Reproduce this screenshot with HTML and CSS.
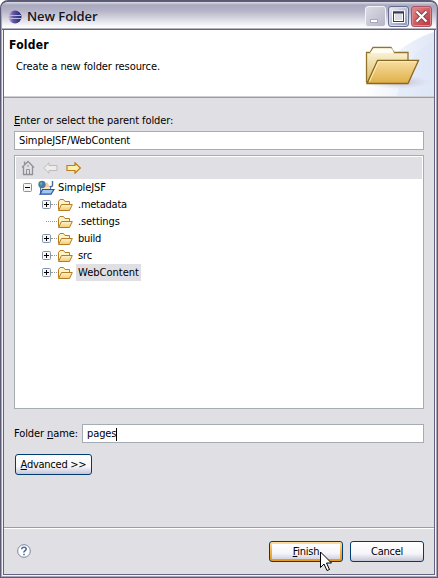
FILE: index.html
```html
<!DOCTYPE html>
<html lang="en">
<head>
<meta charset="utf-8">
<title>New Folder</title>
<link rel="stylesheet" href="styles.css">
</head>
<body>
<svg class="defs" width="0" height="0">
  <defs>
    <linearGradient id="gold" x1="0" y1="0" x2="0" y2="1"><stop offset="0" stop-color="#fff6d5"/><stop offset="1" stop-color="#f3c969"/></linearGradient>
    <linearGradient id="front" x1="0" y1="0" x2="0" y2="1"><stop offset="0" stop-color="#f6dea0"/><stop offset="1" stop-color="#dfaf48"/></linearGradient>
    <linearGradient id="back" x1="0" y1="0" x2="0" y2="1"><stop offset="0" stop-color="#fffbe6"/><stop offset="1" stop-color="#dcbb62"/></linearGradient>
    <linearGradient id="ball" x1="0" y1="0" x2="1" y2="0"><stop offset="0" stop-color="#dcaed0"/><stop offset=".35" stop-color="#625aa4"/><stop offset="1" stop-color="#26266f"/></linearGradient>
    <linearGradient id="sky" x1="0" y1="0" x2="1" y2="0"><stop offset="0" stop-color="#fff"/><stop offset="1" stop-color="#e0e7f7"/></linearGradient>
    <radialGradient id="shade"><stop offset="0" stop-color="#aaa2b8" stop-opacity=".7"/><stop offset="1" stop-color="#c9c5da" stop-opacity="0"/></radialGradient>
    <symbol id="folder" viewBox="0 0 16 14">
      <path d="M1.500 11.500V3.500L3 1.500H6.500L8 3.500H12.500V6" fill="#fff3c8" stroke="#b67b25"/>
      <path d="M1.500 12.500L4.500 6.500H15.300L12.500 12.500Z" fill="url(#gold)" stroke="#b67b25"/>
    </symbol>
    <symbol id="plus" viewBox="0 0 9 9">
      <rect x=".5" y=".5" width="8" height="8" rx="1" fill="#f7f6f4" stroke="#8593a8"/><path d="M2 4.500H7M4.500 2V7" stroke="#000"/>
    </symbol>
  </defs>
</svg>
<div class="window">
  <header class="titlebar">
    <svg class="logo" width="14" height="14" viewBox="0 0 14 14"><circle cx="7" cy="7" r="6.500" fill="url(#ball)"/><path d="M1 5.500H13M1 8.500H13" stroke="#b9b9e2"/></svg>
    <span class="title">New Folder</span>
    <div class="controls">
      <span class="control min"><svg width="19" height="19"><rect x="4.500" y="12.500" width="7" height="3" fill="#fff" stroke="#aaa9bb"/></svg></span>
      <span class="control max"><svg width="19" height="19"><rect x="4.500" y="5" width="10" height="9.500" fill="#d9dae6" stroke="#fff" stroke-width="3"/><rect x="4.500" y="5" width="10" height="9.500" fill="none" stroke="#383a50"/><path d="M4 5.500H15" stroke="#383a50" stroke-width="2"/></svg></span>
      <span class="control close"><svg width="19" height="19"><path d="M4.500 4.500L14.500 14.500M14.500 4.500L4.500 14.500" stroke="#74434b" stroke-width="4"/><path d="M4.500 4.500L14.500 14.500M14.500 4.500L4.500 14.500" stroke="#fff" stroke-width="2.300"/></svg></span>
    </div>
  </header>
  <section class="banner">
    <div class="intro"><h1>Folder</h1><p><span class="t">Create a new folder resource.</span></p></div>
    <svg class="art" width="75" height="66" viewBox="0 0 75 66">
      <path d="M5 66C20 34 44 12 75 2V66Z" fill="url(#sky)"/>
      <path d="M38 66C44 38 57 20 75 10V66Z" fill="#dce5f7" opacity=".5"/>
      <ellipse cx="39" cy="52" rx="33" ry="7" fill="url(#shade)"/>
      <path d="M7.500 52V22.500H11L14 17.500H32L35 22.500H49V50Z" fill="url(#back)" stroke="#94732c" stroke-width="1.300"/>
      <path d="M11 23H35L33 18.500H14.500Z" fill="#fffdf3"/>
      <path d="M8 53.500L18.500 30.500H59.500L49 53.500Z" fill="url(#front)" stroke="#8a681f" stroke-width="1.300"/>
      <path d="M10.500 51.500L19.500 31.700H57.500" fill="none" stroke="#fff3c5"/>
    </svg>
  </section>
  <main class="content">
    <label class="parent-label"><span class="t"><u>E</u>nter or select the parent folder:</span></label>
    <div class="field path"><span class="t">SimpleJSF/WebContent</span></div>
    <div class="browser">
      <div class="tools">
        <svg width="14" height="16" viewBox="0 0 14 16"><path d="M1 7.500L7 1.500L13 7.500M2.500 7V14.500H11.500V7M3.500 4V1.500" fill="none" stroke="#929197" stroke-width="1.300"/><path d="M5.500 14V9.500H8.500V14M6 6H8" fill="none" stroke="#929197"/></svg>
        <svg class="left" width="15" height="12" viewBox="0 0 15 12"><path d="M.7 6L6 .8V3.500H14V8.500H6V11.200Z" fill="#eeeceb" stroke="#bdbbb7"/></svg>
        <svg class="right" width="15" height="12" viewBox="0 0 15 12"><path d="M14.300 6L9 .8V3.500H1V8.500H9V11.200Z" fill="#ffefac" stroke="#bf7e16" stroke-width="1.200"/></svg>
      </div>
      <div class="tree">
        <div class="row root">
          <svg class="toggle" width="9" height="9"><rect x=".5" y=".5" width="8" height="8" rx="1" fill="#f7f6f4" stroke="#8593a8"/><path d="M2 4.500H7" stroke="#000"/></svg>
          <svg class="project" width="17" height="16" viewBox="0 0 17 16"><path d="M2.500 13V6.500H12.500V10" fill="#f7e6bd" stroke="#5575b3"/><path d="M2 14.200L4.500 9.500H16L13 14.200Z" fill="#9fc6f0" stroke="#2c52a4" stroke-width="1.200"/><path d="M6 7L9 2L12 7Z" fill="#f2cda0"/><circle cx="4" cy="4.500" r="3.700" fill="#477ba5"/><path d="M2 3C3 1 5 3 4 4S4 6 3 6Z" fill="#79bd73"/><path d="M14.500 1V5Q14.500 7 12 6.500" fill="none" stroke="#426a9e" stroke-width="1.400"/></svg>
          <span class="name"><span class="t">SimpleJSF</span></span>
        </div>
        <div class="row child"><svg class="toggle"><use href="#plus"/></svg><i></i><svg class="folder"><use href="#folder"/></svg><span class="name"><span class="t tight">.metadata</span></span></div>
        <div class="row child leaf"><i></i><svg class="folder"><use href="#folder"/></svg><span class="name"><span class="t">.settings</span></span></div>
        <div class="row child"><svg class="toggle"><use href="#plus"/></svg><i></i><svg class="folder"><use href="#folder"/></svg><span class="name"><span class="t tight">build</span></span></div>
        <div class="row child"><svg class="toggle"><use href="#plus"/></svg><i></i><svg class="folder"><use href="#folder"/></svg><span class="name"><span class="t">src</span></span></div>
        <div class="row child last"><svg class="toggle"><use href="#plus"/></svg><i></i><svg class="folder"><use href="#folder"/></svg><span class="name selected"><span class="t wide">WebContent</span></span></div>
      </div>
    </div>
    <div class="name-row"><label><span class="t">Folder <u>n</u>ame:</span></label><div class="field"><span class="t">pages</span><b class="caret"></b></div></div>
    <button class="advanced"><span class="t tight"><u>A</u>dvanced &gt;&gt;</span></button>
  </main>
  <footer>
    <svg class="help" width="14" height="14" viewBox="0 0 14 14"><circle cx="7" cy="7" r="6.300" fill="#fff" stroke="#7386a0"/><path d="M4.800 5.200Q4.800 3.300 7 3.300T9.200 5Q9.200 6 8 6.700T7 8.500M7 9.700V11.200" fill="none" stroke="#526c91" stroke-width="1.600"/></svg>
    <button class="finish"><span class="t tight"><u>F</u>inish</span></button>
    <button><span class="t tight">Cancel</span></button>
  </footer>
</div>
<svg class="pointer" width="13" height="21" viewBox="0 0 13 21"><path d="M.5 1V16.500L4 13L7 19.500L9.500 18.500L6.500 12H11.500Z" fill="#fff" stroke="#000"/></svg>
</body>
</html>
```
FILE: styles.css
```css
* { box-sizing: border-box; }
body { margin: 0; width: 438px; height: 578px; overflow: hidden; background: #fff; font: 11px/14px "DejaVu Sans Condensed", "DejaVu Sans", sans-serif; font-stretch: condensed; color: #000; }
.defs { position: absolute; }
svg { display: block; flex: none; }
u { text-decoration: underline; text-underline-offset: 1px; text-decoration-thickness: 1px; }
.t { white-space: nowrap; letter-spacing: -.09px; }
.tight { letter-spacing: -.25px; }
.wide { letter-spacing: 0; }
.window { width: 438px; height: 578px; display: flex; flex-direction: column; border: 1px solid #5c5b75; border-top-width: 2px; border-radius: 8px 8px 0 0; background: #a5a4bb; padding: 0 3px 3px; box-shadow: inset 0 0 0 1px #a5a4bb, inset 0 0 0 2px #f4f4f8, inset 0 0 0 3px #656480; overflow: hidden; }
.titlebar { flex: none; height: 28px; margin: 0 -2px; padding: 4px 4px 0 6px; display: flex; align-items: flex-start; background: linear-gradient(#dedee7 0, #a9a8bf 3px, #b2b1c6 8px, #cecfdb 15px, #f5f5f8 23px, #fff 26px, #656480 27px); }
.logo { margin-top: 4px; }
.title { margin: 1px 0 0 5px; font: 600 13px/18px "Open Sans", sans-serif; letter-spacing: -.08px; color: #151522; }
.controls { display: flex; gap: 2px; margin-left: auto; }
.control { width: 21px; height: 21px; border: 1px solid #f4f4f8; border-radius: 3px; background: linear-gradient(135deg, #eeeef5, #8c91b3); }
.max { border-color: #656c91; box-shadow: inset 0 0 0 1px #d7d9e7; }
.min { background: linear-gradient(135deg, #dcdce6, #b6b5c9); }
.close { border-color: #ad5361; background: linear-gradient(135deg, #e48b8c, #bb3038); box-shadow: inset 0 0 0 1px #dc8990; }
.banner { flex: none; height: 68px; background: #fff; display: flex; justify-content: space-between; border-bottom: 2px solid #9c9ba4; border-bottom-width: 1px; box-shadow: inset 0 -1px #d0cfd5; }
.intro { padding: 8px 0 0 5px; }
h1, p { margin: 0; }
h1 { font-size: 12px; line-height: 14px; letter-spacing: .25px; }
p { margin: 8px 0 0 7px; }
.content { flex: none; height: 429px; background: #e0dfe3; padding: 16px 10px 0; }
.parent-label { display: block; height: 17px; }
.field { height: 19px; border: 1px solid #a5acb2; background: #fff; padding: 2px 4px 1px; display: flex; align-items: center; }
.browser { height: 254px; margin-top: 5px; background: #fff; border: 1px solid #a5acb2; padding: 1px; }
.tools { height: 22px; background: #e0dfe3; display: flex; align-items: center; padding-left: 5px; }
.left { margin-left: 8px; }
.right { margin-left: 8px; }
.row { height: 17px; display: flex; align-items: center; }
.root { padding-left: 7px; }
.project { margin-left: 6px; }
.name { height: 17px; padding: 2px 2px 1px; }
.root .name { margin-left: 1px; }
.selected { background: #e0dfe3; }
.child { padding-left: 26px; }
.child .toggle { width: 9px; height: 9px; }
.child i { width: 6px; border-top: 1px dotted #999; }
.child .folder { width: 16px; height: 14px; }
.child .name { margin-left: 3px; }
.leaf i { width: 11px; margin-left: 4px; }
.name-row { display: flex; align-items: center; margin-top: 15px; }
.name-row .field { width: 342px; margin-left: auto; }
.caret { width: 1px; height: 13px; background: #000; }
button { width: 74px; height: 21px; padding: 0; border: 1px solid #003c74; border-radius: 3px; background: linear-gradient(#fff, #f6f6fa 60%, #c6c5d7); font: inherit; color: #000; }
.advanced { display: block; width: 77px; margin: 11px 0 0 1px; }
footer { flex: none; height: 47px; display: flex; align-items: flex-start; gap: 7px; padding: 13px 10px 0 13px; background: #e0dfe3; border-top: 1px solid #9d9ca2; box-shadow: inset 0 1px #fff; }
.help { margin: 3px auto 0 0; }
.finish { background: linear-gradient(#fff, #f6f6fa 60%, #d3d2e2) content-box, linear-gradient(#fee0a0, #f4b044 50%, #e69714); padding: 2px; }
.pointer { position: absolute; left: 320px; top: 551px; }
```
